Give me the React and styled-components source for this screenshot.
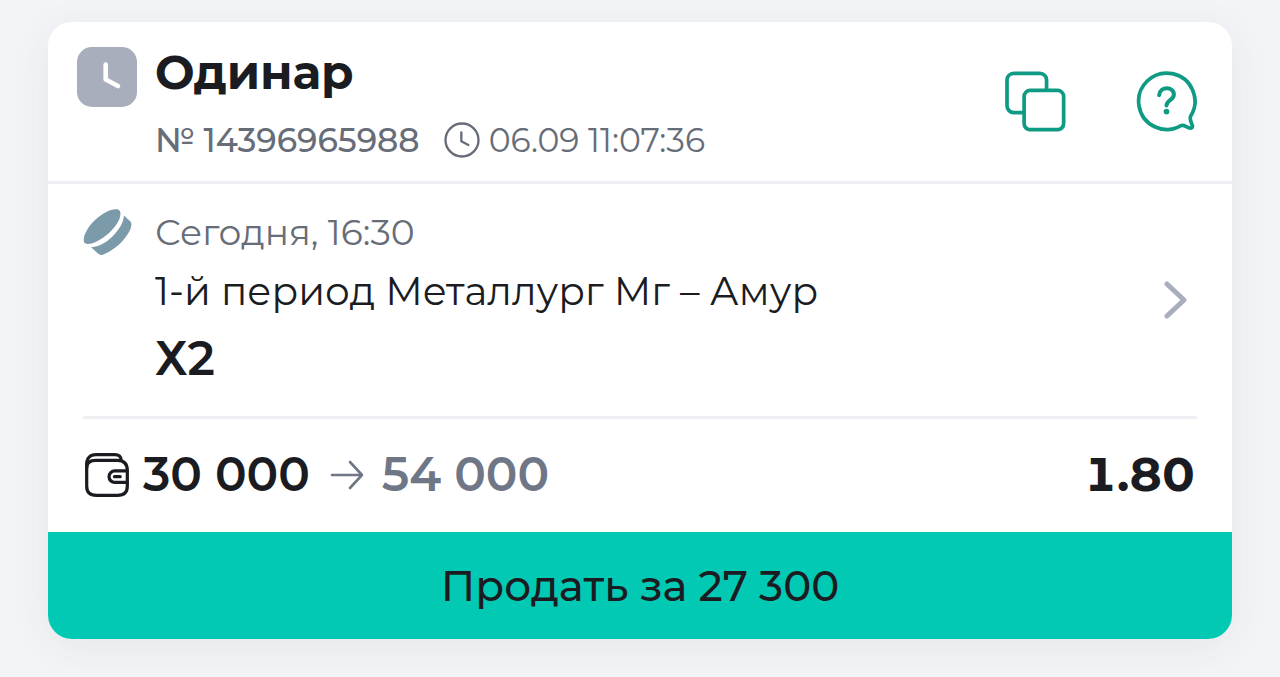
import styled, { createGlobalStyle, ThemeProvider } from "styled-components";

const theme = {
    colors: {
        page: "#f3f4f6",
        card: "#ffffff",
        text: "#1a1c21",
        muted: "#676d78",
        soft: "#6f7787",
        line: "#eeeff2",
        gray: "#a9aebc",
        green: "#0f9a84",
        accent: "#02c9b4",
    },
};

const GlobalStyle = createGlobalStyle`
    body {
        margin: 0;
        background-color: #f3f4f6;
        font-family: Montserrat, Inter, "Open Sans", sans-serif;
    }

    * {
        box-sizing: border-box;
    }
`;

const Page = styled.main`
    padding: 22px 48px 38px;
    background-color: ${({ theme }) => theme.colors.page};
`;

const Card = styled.article`
    overflow: hidden;
    border-radius: 24px;
    color: ${({ theme }) => theme.colors.text};
    background-color: ${({ theme }) => theme.colors.card};
    box-shadow: 0 8px 40px rgba(40, 50, 80, 0.07);
`;

const Header = styled.header`
    display: flex;
    align-items: center;
    padding: 20px 35px 21px 29px;
    border-bottom: 3px solid ${({ theme }) => theme.colors.line};
`;

const IconCell = styled.div`
    display: flex;
    flex: none;
    align-self: flex-start;
    justify-content: center;
    width: 60px;
    margin-right: 18px;
`;

const Status = styled.span`
    display: flex;
    width: 60px;
    height: 60px;
    margin-top: 5px;
    border-radius: 15px;
    background-color: ${({ theme }) => theme.colors.gray};
`;

const Column = styled.div`
    display: flex;
    flex: 1;
    flex-direction: column;
    gap: ${({ $gap }) => $gap};
    min-width: 0;
`;

const Title = styled.h1`
    margin: 0;
    font-size: 47px;
    font-weight: 700;
    line-height: 62px;
`;

const Meta = styled.div`
    display: flex;
    align-items: center;
    font-size: 33px;
    line-height: 40px;
    color: ${({ theme }) => theme.colors.muted};
`;

const Number = styled.span`
    margin-right: 24px;
    font-weight: 500;
`;

const Placed = styled.time`
    margin-left: 9px;
    font-weight: 400;
`;

const Actions = styled.div`
    display: flex;
    gap: 70px;
`;

const IconButton = styled.button`
    display: flex;
    padding: 0;
    border: 0;
    color: ${({ $color, theme }) => theme.colors[$color]};
    background: none;
    cursor: pointer;
`;

const Body = styled.section`
    display: flex;
    align-items: center;
    padding: 25px 44px 25px 29px;
`;

const Start = styled.time`
    font-size: 36px;
    font-weight: 400;
    line-height: 46px;
    color: ${({ theme }) => theme.colors.muted};
`;

const Match = styled.div`
    font-size: 39px;
    font-weight: 400;
    line-height: 48px;
`;

const Outcome = styled.div`
    font-size: 47px;
    font-weight: 600;
    line-height: 64px;
`;

const Footer = styled.footer`
    display: flex;
    align-items: center;
    margin: 0 35px;
    padding: 24px 2px 25px;
    border-top: 3px solid ${({ theme }) => theme.colors.line};
    line-height: 64px;
`;

const Sum = styled.span`
    margin: 0 20px 0 14px;
    font-size: 47px;
    font-weight: 600;
`;

const Win = styled.span`
    flex: 1;
    margin-left: 18px;
    font-size: 47px;
    font-weight: 600;
    color: ${({ theme }) => theme.colors.soft};
`;

const Odds = styled.span`
    font-size: 47px;
    font-weight: 700;
    font-variant-numeric: tabular-nums;
`;

const Sell = styled.button`
    display: block;
    width: 100%;
    padding: 26px 26px 25px;
    border: 0;
    font-family: inherit;
    font-size: 42px;
    font-weight: 500;
    line-height: 56px;
    color: ${({ theme }) => theme.colors.text};
    background-color: ${({ theme }) => theme.colors.accent};
    cursor: pointer;
`;

const Stroke = styled.svg.attrs({
    fill: "none",
    stroke: "currentColor",
    strokeLinecap: "round",
    strokeLinejoin: "round",
    "aria-hidden": true,
})`
    display: block;
    flex: none;
`;

const HandsIcon = () => (
    <Stroke width='60' height='60' viewBox='0 0 60 60' strokeWidth='4.6' color='#fff'>
        <path d='M28.7 17.5V32.5L41 39' />
    </Stroke>
);

const ClockIcon = () => (
    <Stroke width='36' height='36' viewBox='0 0 108 108' strokeWidth='7'>
        <circle cx='54' cy='54' r='49.5' />
        <path d='M52 31V58L73 69' />
    </Stroke>
);

const CopyIcon = () => (
    <Stroke width='61' height='61' viewBox='0 0 182 182' strokeWidth='11'>
        <path d='M124 55V27A20 20 0 0 0 104 7H26A20 20 0 0 0 6 27V104A20 20 0 0 0 26 124H54' />
        <rect x='57' y='58' width='118' height='117' rx='18' />
    </Stroke>
);

const HelpIcon = () => (
    <Stroke width='61' height='61' viewBox='0 0 182 182' strokeWidth='11'>
        <path d='M134 163A84 84 0 1 1 163 135C159 144 164 152 168 162C170 168 166 171 160 170C150 168 144 159 134 163Z' />
        <path d='M69 72C72 44 114 46 113 71C112 87 91 87 91 103' strokeWidth='12' />
        <circle cx='91' cy='121' r='8.5' fill='currentColor' stroke='none' />
    </Stroke>
);

const PuckIcon = () => (
    <svg width='49' height='47' viewBox='0 0 146 140' fill='#7b9bab' aria-hidden='true'>
        <path d='M2 92C2 68 28 34 60 14C78 3 96 -1 106 2C114 6 113 21 106 35C93 61 66 85 38 98C22 105 2 109 2 92Z' />
        <path d='M122 19L142 38C148 46 142 62 130 80C112 107 80 130 59 136C52 138 48 136 43 131L24 114C52 112 76 95 94 75C112 55 121 37 122 19Z' />
    </svg>
);

const ChevronIcon = () => (
    <Stroke width='24' height='40' viewBox='0 0 24 40' strokeWidth='5'>
        <path d='M3 4L20 20L3 36' />
    </Stroke>
);

const WalletIcon = () => (
    <Stroke width='44' height='44' viewBox='0 0 130 130' strokeWidth='9.5'>
        <path d='M5 44V32C5 15 16 5 32 5H88C101 5 106 9 107 22' />
        <path d='M5 44C5 28 16 22 32 22H96C115 22 125 33 125 52V98C125 116 115 125 96 125H34C15 125 5 116 5 98V44Z' />
        <path d='M125 53H88A17 17 0 0 0 88 87H125' />
        <path d='M87 70H104' />
    </Stroke>
);

const ArrowIcon = () => (
    <Stroke width='34' height='30' viewBox='0 0 34 30' strokeWidth='2.6' color='#6f7787'>
        <path d='M2 15H32M20 2L32 15L20 28' />
    </Stroke>
);

const App = () => {
    return (
        <ThemeProvider theme={theme}>
            <GlobalStyle />
            <Page>
                <Card>
                    <Header>
                        <IconCell>
                            <Status>
                                <HandsIcon />
                            </Status>
                        </IconCell>
                        <Column $gap='16px'>
                            <Title>Одинар</Title>
                            <Meta>
                                <Number>№ 14396965988</Number>
                                <ClockIcon />
                                <Placed>06.09 11:07:36</Placed>
                            </Meta>
                        </Column>
                        <Actions>
                            <IconButton $color='green' aria-label='Копировать'>
                                <CopyIcon />
                            </IconButton>
                            <IconButton $color='green' aria-label='Помощь'>
                                <HelpIcon />
                            </IconButton>
                        </Actions>
                    </Header>
                    <Body>
                        <IconCell>
                            <PuckIcon />
                        </IconCell>
                        <Column $gap='12px'>
                            <Start>Сегодня, 16:30</Start>
                            <Match>1-й период Металлург Мг – Амур</Match>
                            <Outcome>Х2</Outcome>
                        </Column>
                        <IconButton $color='gray' aria-label='Подробнее'>
                            <ChevronIcon />
                        </IconButton>
                    </Body>
                    <Footer>
                        <WalletIcon />
                        <Sum>30 000</Sum>
                        <ArrowIcon />
                        <Win>54 000</Win>
                        <Odds>1.80</Odds>
                    </Footer>
                    <Sell>Продать за 27 300</Sell>
                </Card>
            </Page>
        </ThemeProvider>
    );
};

export default App;
